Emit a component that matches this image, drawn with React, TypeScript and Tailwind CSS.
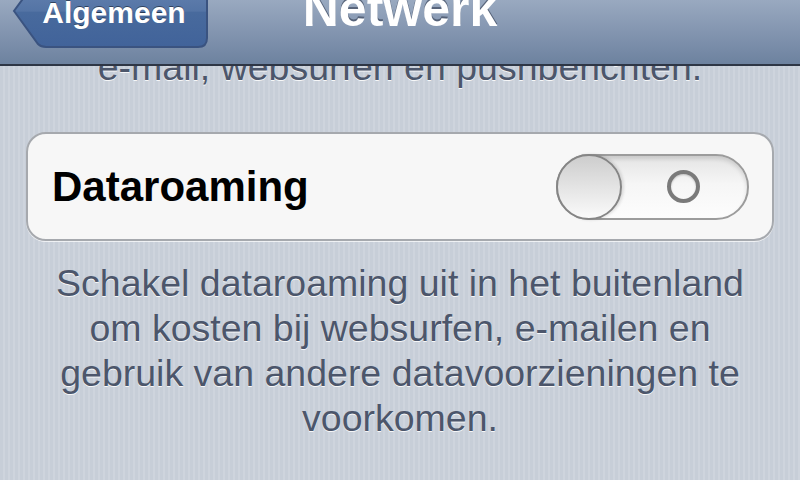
import React from 'react'

const sans = "font-['Liberation_Sans',Arial,Helvetica,sans-serif]"

function BackButton({ label }: { label: string }) {
  return (
    <button className="relative ml-[12px] flex h-[74px] w-[196px] items-center justify-center pl-[12px] pr-[4px]">
      {/* arrow-shaped button body */}
      <svg className="absolute inset-0" width="196" height="74" viewBox="0 0 196 74">
        <defs>
          <linearGradient id="backFill" x1="0" y1="0" x2="0" y2="1">
            <stop offset="0" stopColor="#6b88b4" />
            <stop offset="0.5" stopColor="#5474a5" />
            <stop offset="0.52" stopColor="#486a9d" />
            <stop offset="1" stopColor="#41639a" />
          </linearGradient>
        </defs>
        <path
          d="M2 37 L26 70 Q29 73 34 73 L186 73 Q195 73 195 64 L195 10 Q195 1 186 1 L34 1 Q29 1 26 4 Z"
          fill="url(#backFill)"
          stroke="#3a5380"
          strokeWidth="2"
        />
      </svg>
      <span
        className={`relative mt-[3px] text-[30px] font-bold leading-none text-white [text-shadow:0_-1px_0_rgba(0,0,0,0.45)] ${sans}`}
      >
        {label}
      </span>
    </button>
  )
}

function Toggle() {
  return (
    <div className="flex h-[66px] w-[193px] items-center rounded-full border-2 border-[#9c9c9c] bg-[linear-gradient(to_bottom,#e4e4e4,#f6f6f6_45%,#fdfdfd)] shadow-[inset_0_3px_4px_rgba(0,0,0,0.12)]">
      <div className="-ml-[2px] h-[66px] w-[66px] shrink-0 rounded-full border-2 border-[#858585] bg-[linear-gradient(to_bottom,#cdcdcd,#e6e6e6_55%,#fafafa)] shadow-[2px_0_3px_rgba(0,0,0,0.12)]" />
      <div className="flex flex-1 items-center justify-center pr-[2px]">
        <div className="h-[33px] w-[33px] rounded-full border-[4px] border-[#7a7a7a] shadow-[inset_0_1px_2px_rgba(0,0,0,0.2)]" />
      </div>
    </div>
  )
}

export default function App() {
  return (
    <div
      className={`relative h-[480px] w-[800px] overflow-hidden bg-[repeating-linear-gradient(90deg,#c7ced8_0px,#c7ced8_3px,#ced4dd_3px,#ced4dd_5px)] ${sans}`}
    >
      {/* navigation bar */}
      <header className="relative z-10 flex h-[66px] items-end overflow-hidden border-b-2 border-[#2e3645] bg-[linear-gradient(to_bottom,#99a9c0,#8395b0_50%,#6d829f)] pb-[16px]">
        <BackButton label="Algemeen" />
        <h1 className="absolute inset-x-0 top-[-16px] text-center text-[50px] font-bold leading-none text-white [text-shadow:0_-2px_0_rgba(40,50,70,0.55)]">
          Netwerk
        </h1>
      </header>

      <main className="-mt-[21px] flex flex-col">
        <p className="text-center text-[37.5px] leading-[45px] text-[#4c566b] [text-shadow:0_1px_0_rgba(255,255,255,0.85)]">
          e-mail, websurfen en pushberichten.
        </p>

        <section className="mx-[26px] mt-[42px] flex h-[109px] items-center justify-between rounded-[20px] border-2 border-[#a6a9ae] bg-[#f7f7f7] pl-[24px] pr-[23px] shadow-[0_1px_0_rgba(255,255,255,0.7)]">
          <span className="text-[42px] font-bold leading-none text-black">Dataroaming</span>
          <Toggle />
        </section>

        <p className="mt-[20px] text-center text-[37.5px] leading-[45px] text-[#4c566b] [text-shadow:0_1px_0_rgba(255,255,255,0.85)]">
          Schakel dataroaming uit in het buitenland
          <br />
          om kosten bij websurfen, e-mailen en
          <br />
          gebruik van andere datavoorzieningen te
          <br />
          voorkomen.
        </p>
      </main>
    </div>
  )
}
